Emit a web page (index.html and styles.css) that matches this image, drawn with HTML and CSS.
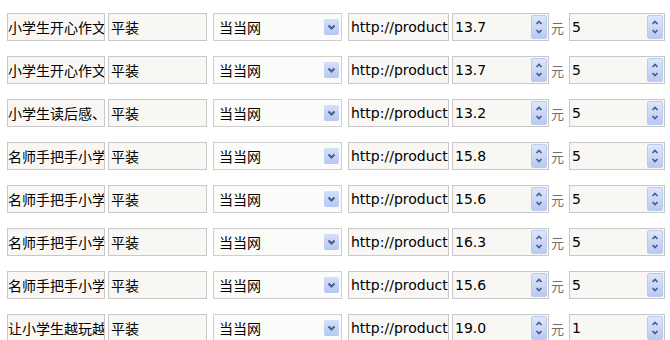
FILE: index.html
```html
<!DOCTYPE html>
<html>
  <head>
    <title>商品列表</title>
    <link rel="stylesheet" href="styles.css">
  </head>
  <body>
    <div id="bookList" class="list">
      <!-- rows are filled by the script below -->
    </div>

    <script>
      const books = [
        { title: "小学生开心作文起步", price: "13.7", qty: "5" },
        { title: "小学生开心作文大全", price: "13.7", qty: "5" },
        { title: "小学生读后感、观后感", price: "13.2", qty: "5" },
        { title: "名师手把手小学生作文", price: "15.8", qty: "5" },
        { title: "名师手把手小学生日记", price: "15.6", qty: "5" },
        { title: "名师手把手小学生周记", price: "16.3", qty: "5" },
        { title: "名师手把手小学生看图", price: "15.6", qty: "5" },
        { title: "让小学生越玩越聪明", price: "19.0", qty: "1" }
      ];

      const arrowDown = '<svg width="15" height="16" viewBox="0 0 15 16"><path d="M4.5 6.5 L7.5 9.5 L10.5 6.5" stroke="#4b5d85" stroke-width="2" fill="none"/></svg>';
      const arrowsUpDown = '<svg width="14" height="22" viewBox="0 0 14 22"><path d="M4.5 8 L7 5.5 L9.5 8" stroke="#4b5d85" stroke-width="1.7" fill="none"/><path d="M4.5 14 L7 16.5 L9.5 14" stroke="#4b5d85" stroke-width="1.7" fill="none"/></svg>';

      const list = document.getElementById("bookList");

      books.forEach(function (book) {
        const row = document.createElement("div");
        row.className = "row";
        row.innerHTML =
          '<div class="box title"><input class="cjk" type="text" value="' + book.title + '"></div>' +
          '<div class="box bind"><input class="cjk" type="text" value="平装"></div>' +
          '<div class="box shop"><span class="shop-name">当当网</span><span class="drop">' + arrowDown + '</span></div>' +
          '<div class="box link"><input type="text" value="http://product.dangdang.com/"></div>' +
          '<div class="box price"><input type="text" value="' + book.price + '"><span class="spin">' + arrowsUpDown + '</span></div>' +
          '<span class="unit">元</span>' +
          '<div class="box qty"><input type="text" value="' + book.qty + '"><span class="spin">' + arrowsUpDown + '</span></div>';
        list.appendChild(row);
      });
    </script>
  </body>
</html>
```

FILE: styles.css
```css
body {
  margin: 0;
  padding: 13px 0 0 7px;
  background: #ffffff;
  font-family: "DejaVu Sans", "Noto Sans CJK SC", sans-serif;
  font-size: 14px;
  color: #000000;
}

.row {
  display: flex;
  align-items: center;
  height: 28px;
  margin-bottom: 15px;
}

.box {
  display: flex;
  align-items: center;
  height: 28px;
  box-sizing: border-box;
  border: 1px solid #c8c8c8;
  background-color: #f8f7f4;
  overflow: hidden;
}

.box input {
  flex: 1;
  min-width: 0;
  height: 100%;
  border: none;
  background: transparent;
  padding: 0 0 0 2px;
  margin: 0;
  outline: none;
  color: #000000;
  font-family: "DejaVu Sans", "Noto Sans CJK SC", sans-serif;
  font-size: 14px;
}

.box input.cjk {
  font-family: "Noto Sans CJK SC", sans-serif;
}

.title {
  width: 98px;
}

.title input {
  padding-left: 0;
}

.bind {
  width: 99px;
  margin-left: 3px;
}

.shop {
  width: 129px;
  margin-left: 6px;
  background-color: #fbfbf9;
  border-color: #cfcfcf;
  justify-content: space-between;
}

.shop-name {
  padding-left: 5px;
  font-family: "Noto Sans CJK SC", sans-serif;
}

.drop {
  display: flex;
  width: 15px;
  height: 16px;
  margin-right: 2px;
  border-radius: 2px;
  background: linear-gradient(#d4e0fa, #b4c8f4);
}

.link {
  width: 101px;
  margin-left: 6px;
}

.price {
  width: 97px;
  margin-left: 3px;
}

.qty {
  width: 96px;
}

.spin {
  display: flex;
  align-items: center;
  justify-content: center;
  width: 16px;
  height: 24px;
  margin-right: 1px;
  box-sizing: border-box;
  border: 1px solid #bccbf0;
  border-radius: 2px;
  background: linear-gradient(#dde6fb, #b8caf3);
}

.unit {
  width: 20px;
  padding-left: 2px;
  box-sizing: border-box;
  color: #6f6f6f;
  font-family: "Noto Sans CJK SC", sans-serif;
  font-size: 13px;
}
```
